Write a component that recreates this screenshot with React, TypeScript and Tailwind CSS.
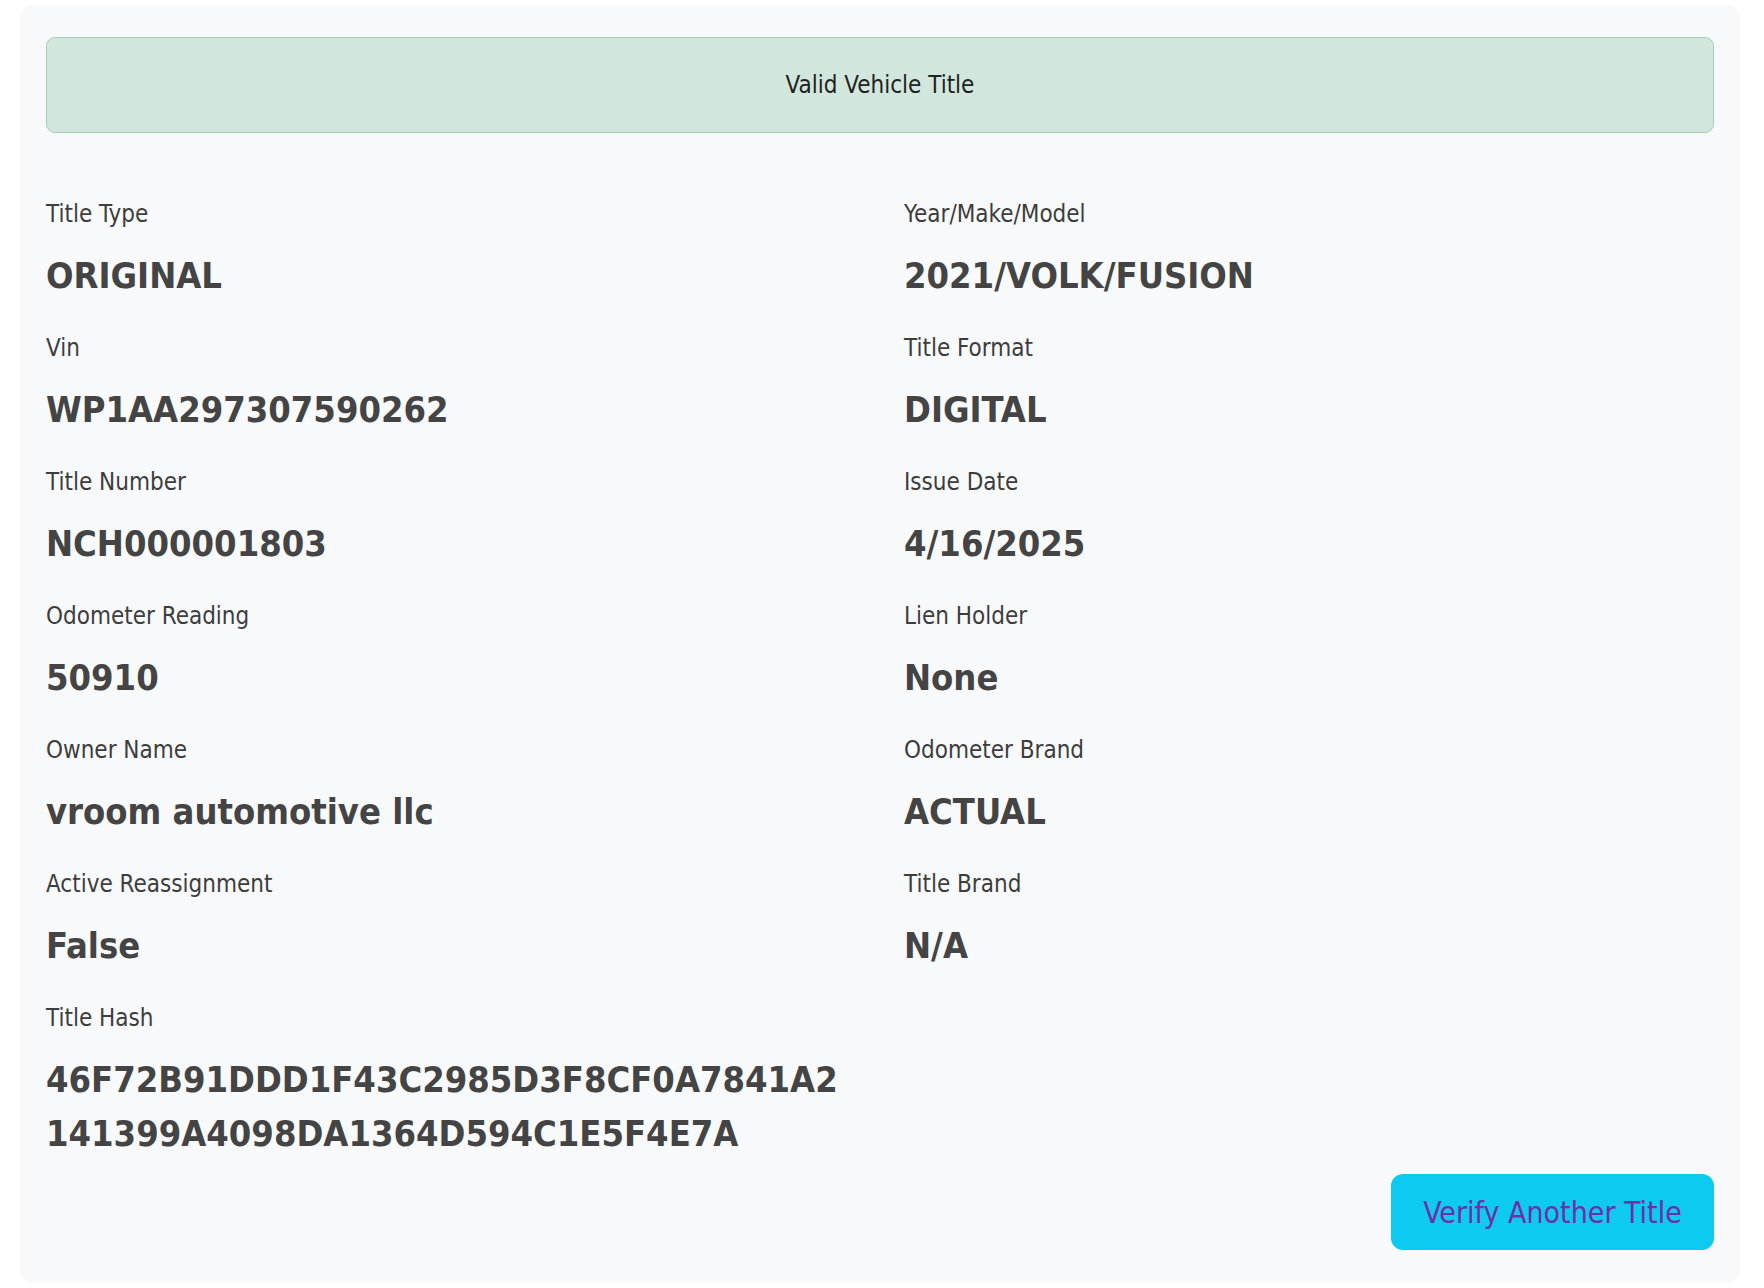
import React from "react";

type Field = { label: string; value: string };

const fields: Field[] = [
  { label: "Title Type", value: "ORIGINAL" },
  { label: "Year/Make/Model", value: "2021/VOLK/FUSION" },
  { label: "Vin", value: "WP1AA297307590262" },
  { label: "Title Format", value: "DIGITAL" },
  { label: "Title Number", value: "NCH000001803" },
  { label: "Issue Date", value: "4/16/2025" },
  { label: "Odometer Reading", value: "50910" },
  { label: "Lien Holder", value: "None" },
  { label: "Owner Name", value: "vroom automotive llc" },
  { label: "Odometer Brand", value: "ACTUAL" },
  { label: "Active Reassignment", value: "False" },
  { label: "Title Brand", value: "N/A" },
  {
    label: "Title Hash",
    value: "46F72B91DDD1F43C2985D3F8CF0A7841A2141399A4098DA1364D594C1E5F4E7A",
  },
];

function InfoField({ label, value }: Field) {
  return (
    <div className="min-w-0">
      <div className="text-[24px] leading-[36px] text-[#3d3d3d] mb-[17px]">{label}</div>
      <div className="text-[36px] leading-[54px] font-bold text-[#444444] break-all">{value}</div>
    </div>
  );
}

export default function App() {
  return (
    <div className="min-h-screen bg-white pl-[20px] pr-[24px] pt-[5px] font-['DejaVu_Sans_Condensed','DejaVu_Sans',sans-serif] font-stretch-condensed">
      <div className="bg-[#f8f9fa] rounded-[12px] px-[26px] pt-[32px] pb-[32px]">
        {/* status banner */}
        <div className="h-[96px] flex items-center justify-center rounded-[9px] border-[1.5px] border-[#a3cfbb] bg-[#d1e7dd] text-[24px] text-[#222222]">
          Valid Vehicle Title
        </div>

        <div className="mt-[63px] grid grid-cols-2 gap-x-[48px] gap-y-[27px]">
          {fields.map((f) => (
            <InfoField key={f.label} label={f.label} value={f.value} />
          ))}
        </div>

        <div className="mt-[13px] flex justify-end">
          <button className="w-[323px] h-[76px] rounded-[12px] bg-[#0dcaf0] text-[30px] text-[#6f2fa6] flex items-center justify-center">
            Verify Another Title
          </button>
        </div>
      </div>
    </div>
  );
}
